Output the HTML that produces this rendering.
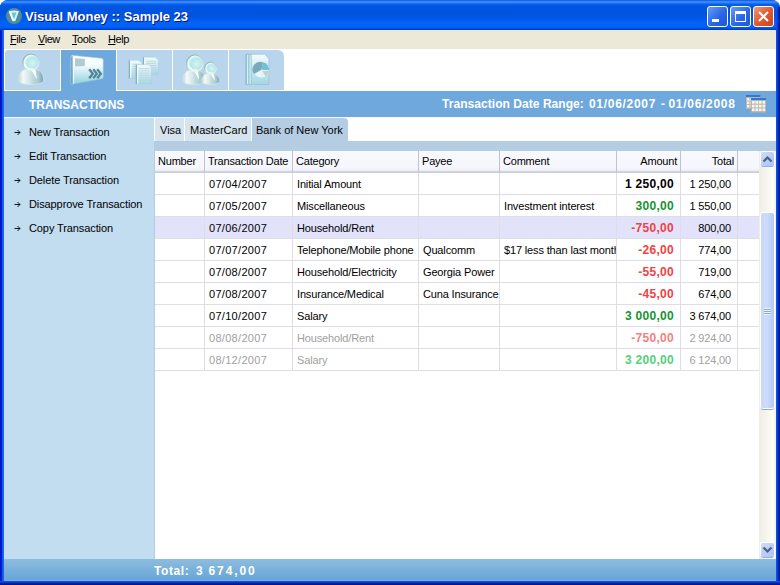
<!DOCTYPE html>
<html><head><meta charset="utf-8">
<style>
*{margin:0;padding:0;box-sizing:border-box}
html,body{width:780px;height:585px;overflow:hidden;background:#fff}
body{position:relative;font-family:"Liberation Sans",sans-serif;font-size:11px;color:#000}
.a{position:absolute}
#frame{left:0;top:0;width:780px;height:585px;background:linear-gradient(90deg,#0012b8 0,#0022d0 1.5px,#0a3ee8 2px,#1d68f6 3px,#1a62f2 4px);border-radius:8px 8px 0 0}
#frameR{left:776px;top:7px;width:4px;height:574px;background:linear-gradient(90deg,#0a58f8 0,#0848e6 1px,#0434c8 2px,#00209f 3px,#001282 4px)}
#frameB{left:0;top:581px;width:780px;height:4px;background:linear-gradient(#0a55f5 0,#0848e2 1px,#0428b0 2px,#001a92 3px,#001080 4px)}
#title{left:0;top:0;width:780px;height:30px;border-radius:8px 8px 0 0;
 background:linear-gradient(#0a4ad8 0,#2a7cff 1px,#3b92ff 2px,#2a7cfa 3px,#0a62f0 4px,#0056e2 6px,#0053de 13px,#0057e6 18px,#0061f6 22px,#0064fb 26px,#0058ea 28px,#0036c4 30px)}
#ttext{left:25px;top:9px;color:#fff;font-weight:bold;font-size:13px;text-shadow:1px 1px 0 #0a1883;white-space:nowrap}
.tb{top:6px;width:21px;height:21px;border:1px solid #fff;border-radius:3px;background:linear-gradient(135deg,#6a9cf8,#2a66e8 55%,#1e56d8)}
#menu{left:4px;top:30px;width:772px;height:19px;background:#ece9d8}
.mi{top:32px;font-size:11px;line-height:14px;letter-spacing:-0.45px}
.mi u{text-decoration:underline}
#toolbar{left:4px;top:49px;width:772px;height:42px;background:#fff}
.tab{top:50px;width:55px;height:40px;background:#b9d5ee}
#band{left:4px;top:91px;width:772px;height:26px;background:#6ea8dc}
#bandline{left:4px;top:117px;width:772px;height:1px;background:#f4f9fd}
#side{left:4px;top:118px;width:150px;height:441px;background:#c2ddf0}
.si{left:29px;font-size:11px;white-space:nowrap;line-height:14px;letter-spacing:-0.1px}
.sa{left:14px;width:8px;height:8px}
#sidesep{left:154px;top:141px;width:1px;height:418px;background:#b5cde3}
#tabs{left:154px;top:118px;width:622px;height:23px;background:#fff}
.t2{top:118px;height:23px;background:#d6e4ef;line-height:25px;padding-left:5px;white-space:nowrap;font-size:11px}
#tband{left:154px;top:141px;width:622px;height:10px;background:#b5cde3}
#grid{left:155px;top:151px;width:604px;height:408px;background:#fff;overflow:hidden}
.hd{top:151px;height:20px;background:linear-gradient(#f8f9fd 0,#f6f7fc 17px,#ecebf3 20px)}
.hl{position:absolute;top:151px;width:1px;height:22px;background:#c2c1d4}
.hb{left:155px;top:171px;width:604px;height:2px;background:linear-gradient(#d9d8e6,#c8c7da)}
.vl{position:absolute;top:173px;width:1px;height:198px;background:#dfdee6}
.rl{position:absolute;left:155px;width:604px;height:1px;background:#dfdee6}
.c{position:absolute;height:21px;line-height:23px;white-space:nowrap;overflow:hidden;font-size:11px;letter-spacing:-0.15px}
.dt{letter-spacing:0.3px}
.r{text-align:right}
.ht{position:absolute;top:151px;height:20px;line-height:20px;white-space:nowrap;font-size:11px;letter-spacing:-0.2px}
.b{font-weight:bold;font-size:12px;letter-spacing:0.3px}
.g{color:#139532;font-weight:bold;font-size:12px;letter-spacing:0.3px}
.rd{color:#f04343;font-weight:bold;font-size:12px;letter-spacing:0.3px}
.gl{color:#52d17a;font-weight:bold;font-size:12px;letter-spacing:0.3px}
.rdl{color:#f47f7f;font-weight:bold;font-size:12px;letter-spacing:0.3px}
.gr{color:#a0a0a0}
#sb{left:759px;top:151px;width:17px;height:408px;background:linear-gradient(90deg,#eeede5,#f4f3ee 40%,#fdfdf9 80%,#f3f1e8)}
.sbtn{left:761px;width:13px;height:14px;border-radius:2px;background:linear-gradient(135deg,#d0defc,#b8ccf7 60%,#adc3f4);box-shadow:0 1px 0 #97aee0,-1px -1px 0 #fff,1px 1px 0 #fff}
#thumb{left:761px;top:213px;width:13px;height:195px;border-radius:2px;background:linear-gradient(90deg,#c8d8fb,#cddbfc 40%,#bccff8 85%,#b0c6f4);box-shadow:-1px 0 0 #fff,1px 0 0 #fff,0 -1px 0 #fff,0 1px 0 #fff,0 2px 0 #8fa8dc}
#foot{left:4px;top:559px;width:772px;height:22px;background:linear-gradient(#8dbde0,#68a6d7 92%,#78b4de)}
.ftext{top:563px;color:#fff;font-weight:bold;font-size:12px;line-height:16px;white-space:nowrap}
</style></head><body>
<div class="a" id="frame"></div><div class="a" id="frameB"></div>
<div class="a" id="title"></div><div class="a" id="frameR"></div>
<svg class="a" style="left:5px;top:7px" width="18" height="18" viewBox="0 0 18 18"><circle cx="9" cy="9" r="8" fill="#4f8c9c"/><path d="M4 4.2 Q9 3 14 4.2 L10.2 14.2 L7.8 14.2Z" fill="#d8f6fa"/><path d="M6.5 5.6 L11.5 5.6 L9.3 11.5 L8.7 11.5Z" fill="#6cc2d8"/><path d="M4.4 4.6 L7.9 13.6" stroke="#ffffff" stroke-width="1.3"/></svg>
<div class="a" id="ttext">Visual Money :: Sample 23</div>
<div class="a tb" style="left:707px"><div class="a" style="left:4px;top:12px;width:7px;height:3px;background:#fff"></div></div>
<div class="a tb" style="left:730px"><div class="a" style="left:4px;top:4px;width:11px;height:11px;border:1px solid #fff;border-top-width:3px"></div></div>
<div class="a tb" style="left:753px;background:linear-gradient(135deg,#f09a7a,#e05a32 50%,#cc4420)"><svg class="a" style="left:4px;top:4px" width="11" height="11"><path d="M1 1L10 10M10 1L1 10" stroke="#fff" stroke-width="2"/></svg></div>
<div class="a" id="menu"></div>
<div class="a mi" style="left:10px"><u>F</u>ile</div>
<div class="a mi" style="left:38px"><u>V</u>iew</div>
<div class="a mi" style="left:72px"><u>T</u>ools</div>
<div class="a mi" style="left:108px"><u>H</u>elp</div>
<div class="a" id="toolbar"></div>
<div class="a tab" style="left:5px;border-top-left-radius:3px"></div>
<div class="a tab" style="left:61px;height:41px;background:#6ea8dc"></div>
<div class="a tab" style="left:117px"></div>
<div class="a tab" style="left:173px"></div>
<div class="a tab" style="left:229px;border-top-right-radius:6px"></div>
<div class="a" id="band"></div><div class="a" id="bandline"></div>
<svg class="a" style="left:0;top:0" width="780" height="120" viewBox="0 0 780 120"><defs><radialGradient id="hg" cx="0.6" cy="0.55" r="0.62"><stop offset="0" stop-color="#d4f4f4"/><stop offset="0.55" stop-color="#b8e6ea"/><stop offset="0.82" stop-color="#e8faf6"/><stop offset="1" stop-color="#96b8be"/></radialGradient><linearGradient id="bg" x1="0" y1="0" x2="1" y2="0"><stop offset="0" stop-color="#bcd6da"/><stop offset="0.18" stop-color="#f4fafa"/><stop offset="0.42" stop-color="#d6e8ea"/><stop offset="0.6" stop-color="#bcd6dc"/><stop offset="0.8" stop-color="#a8cad2"/><stop offset="1" stop-color="#6fa2b4"/></linearGradient><linearGradient id="cg" x1="0" y1="0" x2="0" y2="1"><stop offset="0" stop-color="#ffffff"/><stop offset="0.35" stop-color="#f4fcfd"/><stop offset="1" stop-color="#8fd0e0"/></linearGradient><linearGradient id="dg" x1="0" y1="0" x2="0" y2="1"><stop offset="0" stop-color="#f4fbfd"/><stop offset="1" stop-color="#a4d6e2"/></linearGradient><linearGradient id="hs" x1="0" y1="0" x2="0.6" y2="1"><stop offset="0" stop-color="#7fa0a8"/><stop offset="0.5" stop-color="#a9c8c8"/><stop offset="1" stop-color="#f2fbf0"/></linearGradient></defs><path d="M18.5 80.02 C18.5 71.7 23.5 68.5 31.0 68.5 C38.5 68.5 43.5 71.7 43.5 80.02 C43.5 83.5 37.25 84.5 31.0 84.5 C24.75 84.5 18.5 83.5 18.5 80.02Z" fill="url(#bg)" stroke="#d8e6dc" stroke-width="0.7"/><path d="M31.0 69.0 L35.5 69.7 L36.75 78.1 L36.25 78.74Z" fill="#ffffff" opacity="0.95"/><circle cx="30.9" cy="62.3" r="8.2" fill="url(#hg)" stroke="url(#hs)" stroke-width="0.9"/><path d="M24.34 63.94 A6.56 6.56 0 0 0 33.36 68.45" fill="none" stroke="#f4fff8" stroke-width="1.64" opacity="0.8"/><path d="M72.5 55.2 L101.8 58.2 Q103.3 58.4 103.3 60 L103.3 77.2 Q103.3 78.6 101.8 78.8 L72.5 84.2 Q70.8 84.4 70.8 82.6 L70.8 57 Q70.8 55 72.5 55.2Z" fill="url(#cg)" stroke="#8cc4d2" stroke-width="0.6"/><path d="M71.2 56.5 L72.6 56 L72.6 83.6 L71.2 83.2Z" fill="#5e9cb0"/><path d="M73 56.2 L74 56.2 L74 83.6 L73 83.8Z" fill="#f4fcff"/><path d="M75 58.3 L84.8 59.1 L84.8 66 L75 66.4Z" fill="#b2cbd3"/><path d="M89.2 69.2 L92.8 73.8 L89.2 78.2" fill="none" stroke="#4f8598" stroke-width="2.3"/><path d="M93.2 69.2 L96.8 73.8 L93.2 78.2" fill="none" stroke="#4f8598" stroke-width="2.3"/><path d="M97.2 69.2 L100.8 73.8 L97.2 78.2" fill="none" stroke="#4f8598" stroke-width="2.3"/><path d="M128.8 60.3 H138.8 L141.8 63.3 V78.4 H128.8Z" fill="url(#dg)" stroke="#a8cdd8" stroke-width="0.5"/><rect x="128.8" y="60.3" width="1.3" height="18.1" fill="#80b2c4"/><rect x="130.10000000000002" y="60.599999999999994" width="1.2" height="17.5" fill="#f0fbff"/><rect x="132.3" y="63.8" width="7.5" height="0.9" fill="#b8d8e2"/><rect x="132.3" y="66.0" width="7.5" height="0.9" fill="#b8d8e2"/><rect x="132.3" y="68.2" width="7.5" height="0.9" fill="#b8d8e2"/><rect x="132.3" y="70.39999999999999" width="7.5" height="0.9" fill="#b8d8e2"/><rect x="132.3" y="72.6" width="7.5" height="0.9" fill="#b8d8e2"/><rect x="132.3" y="74.8" width="7.5" height="0.9" fill="#b8d8e2"/><path d="M142.9 57.2 H155.3 L158.3 60.2 V74.6 H142.9Z" fill="url(#dg)" stroke="#a8cdd8" stroke-width="0.5"/><rect x="142.9" y="57.2" width="1.3" height="17.4" fill="#80b2c4"/><rect x="144.20000000000002" y="57.5" width="1.2" height="16.799999999999997" fill="#f0fbff"/><rect x="146.4" y="60.7" width="9.9" height="0.9" fill="#b8d8e2"/><rect x="146.4" y="62.900000000000006" width="9.9" height="0.9" fill="#b8d8e2"/><rect x="146.4" y="65.10000000000001" width="9.9" height="0.9" fill="#b8d8e2"/><rect x="146.4" y="67.3" width="9.9" height="0.9" fill="#b8d8e2"/><rect x="146.4" y="69.5" width="9.9" height="0.9" fill="#b8d8e2"/><rect x="146.4" y="71.7" width="9.9" height="0.9" fill="#b8d8e2"/><path d="M135.7 64.7 H148.39999999999998 L151.39999999999998 67.7 V83.9 H135.7Z" fill="url(#dg)" stroke="#a8cdd8" stroke-width="0.5"/><rect x="135.7" y="64.7" width="1.3" height="19.2" fill="#80b2c4"/><rect x="137.0" y="65.0" width="1.2" height="18.599999999999998" fill="#f0fbff"/><rect x="139.2" y="68.2" width="10.2" height="0.9" fill="#b8d8e2"/><rect x="139.2" y="70.4" width="10.2" height="0.9" fill="#b8d8e2"/><rect x="139.2" y="72.60000000000001" width="10.2" height="0.9" fill="#b8d8e2"/><rect x="139.2" y="74.8" width="10.2" height="0.9" fill="#b8d8e2"/><rect x="139.2" y="77.0" width="10.2" height="0.9" fill="#b8d8e2"/><rect x="139.2" y="79.2" width="10.2" height="0.9" fill="#b8d8e2"/><rect x="139.2" y="81.4" width="10.2" height="0.9" fill="#b8d8e2"/><path d="M182.8 80.384 C182.8 72.74 187.24 69.8 193.9 69.8 C200.56 69.8 205 72.74 205 80.384 C205 83.5 199.45 84.5 193.9 84.5 C188.35000000000002 84.5 182.8 83.5 182.8 80.384Z" fill="url(#bg)" stroke="#d8e6dc" stroke-width="0.7"/><path d="M193.9 70.3 L197.89600000000002 71.0 L199.006 78.62 L198.562 79.208Z" fill="#ffffff" opacity="0.95"/><circle cx="194.8" cy="63.3" r="8.4" fill="url(#hg)" stroke="url(#hs)" stroke-width="0.9"/><path d="M188.08 64.98 A6.720000000000001 6.720000000000001 0 0 0 197.32000000000002 69.6" fill="none" stroke="#f4fff8" stroke-width="1.6800000000000002" opacity="0.8"/><path d="M201.6 81.364 C201.6 75.53999999999999 205.22 73.3 210.64999999999998 73.3 C216.07999999999998 73.3 219.7 75.53999999999999 219.7 81.364 C219.7 83.5 215.17499999999998 84.5 210.64999999999998 84.5 C206.125 84.5 201.6 83.5 201.6 81.364Z" fill="url(#bg)" stroke="#d8e6dc" stroke-width="0.7"/><path d="M210.64999999999998 73.8 L213.908 74.5 L214.813 80.02 L214.451 80.468Z" fill="#ffffff" opacity="0.95"/><circle cx="210.5" cy="68.1" r="5.9" fill="url(#hg)" stroke="url(#hs)" stroke-width="0.9"/><path d="M205.78 69.28 A4.720000000000001 4.720000000000001 0 0 0 212.27 72.52499999999999" fill="none" stroke="#f4fff8" stroke-width="1.1800000000000002" opacity="0.8"/><path d="M245.6 54.2 H264.5 L268.9 58.5 V84.5 H245.6Z" fill="url(#dg)" stroke="#8ec0d0" stroke-width="0.6"/><rect x="245.6" y="54.2" width="6" height="30.3" fill="#8cc2d4"/><rect x="247.2" y="55" width="1" height="29" fill="#f0fbff"/><rect x="249.6" y="55" width="1" height="29" fill="#f0fbff"/><circle cx="261.4" cy="69.8" r="7.8" fill="#e2f2f6"/><path d="M261.4 69.8 L268.9 67 A7.8 7.8 0 1 0 261.4 77.6Z" fill="#e8f6f8"/><path d="M261.4 69.8 L254 74 A7.8 7.8 0 0 1 263 62.2Z" fill="#78aabb"/><path d="M261.4 69.8 L263 62.2 A7.8 7.8 0 0 1 269.2 70.2Z" fill="#6fc0d8"/><path d="M262.5 71 L269 71 L266 77Z" fill="#c4ccc8"/><rect x="746" y="95" width="14.5" height="14" fill="#bcb8b0"/><rect x="747.0" y="98.2" width="2.4" height="2.5" fill="#f2f2ee"/><rect x="747.0" y="101.60000000000001" width="2.4" height="2.5" fill="#f2f2ee"/><rect x="747.0" y="105.0" width="2.4" height="2.5" fill="#f2f2ee"/><rect x="750.2" y="98.2" width="2.4" height="2.5" fill="#f2f2ee"/><rect x="750.2" y="101.60000000000001" width="2.4" height="2.5" fill="#f2f2ee"/><rect x="750.2" y="105.0" width="2.4" height="2.5" fill="#f2f2ee"/><rect x="746" y="95" width="14.5" height="2" fill="#2c7ad6"/><rect x="750.5" y="97.5" width="15.5" height="15" fill="#a8a49c" opacity="0.5"/><rect x="751" y="98" width="15" height="14.5" fill="#bab6ae"/><rect x="751" y="98" width="15" height="2" fill="#2c7ad6"/><rect x="752.0" y="101.0" width="2.6" height="2.7" fill="#f4f4f0"/><rect x="752.0" y="104.7" width="2.6" height="2.7" fill="#f4f4f0"/><rect x="752.0" y="108.4" width="2.6" height="2.7" fill="#f4f4f0"/><rect x="755.5" y="101.0" width="2.6" height="2.7" fill="#f4f4f0"/><rect x="755.5" y="104.7" width="2.6" height="2.7" fill="#f4f4f0"/><rect x="755.5" y="108.4" width="2.6" height="2.7" fill="#f4f4f0"/><rect x="759.0" y="101.0" width="2.6" height="2.7" fill="#f4f4f0"/><rect x="759.0" y="104.7" width="2.6" height="2.7" fill="#f4f4f0"/><rect x="759.0" y="108.4" width="2.6" height="2.7" fill="#f4f4f0"/><rect x="762.5" y="101.0" width="2.6" height="2.7" fill="#f4f4f0"/><rect x="762.5" y="104.7" width="2.6" height="2.7" fill="#f4f4f0"/><rect x="762.5" y="108.4" width="2.6" height="2.7" fill="#f4f4f0"/></svg>
<div class="a" style="left:29px;top:98px;color:#fff;font-weight:bold;font-size:12px;letter-spacing:0px;line-height:14px">TRANSACTIONS</div>
<div class="a" style="left:442px;top:97px;color:#fff;font-weight:bold;font-size:12px;letter-spacing:0.05px;line-height:14px;white-space:nowrap">Transaction Date Range:</div>
<div class="a" style="left:589px;top:97px;color:#fff;font-weight:bold;font-size:12px;letter-spacing:0.7px;line-height:14px;white-space:nowrap">01/06/2007</div>
<div class="a" style="left:661px;top:97px;color:#fff;font-weight:bold;font-size:12px;letter-spacing:0px;line-height:14px;white-space:nowrap">-</div>
<div class="a" style="left:668.5px;top:97px;color:#fff;font-weight:bold;font-size:12px;letter-spacing:0.7px;line-height:14px;white-space:nowrap">01/06/2008</div>
<div class="a" id="side"></div>
<svg class="a sa" style="top:128px" width="8" height="8"><path d="M0.5 4.5H6M3.5 2L6 4.5L3.5 7" fill="none" stroke="#000" stroke-width="0.9"/></svg>
<div class="a si" style="top:125px">New Transaction</div>
<svg class="a sa" style="top:152px" width="8" height="8"><path d="M0.5 4.5H6M3.5 2L6 4.5L3.5 7" fill="none" stroke="#000" stroke-width="0.9"/></svg>
<div class="a si" style="top:149px">Edit Transaction</div>
<svg class="a sa" style="top:176px" width="8" height="8"><path d="M0.5 4.5H6M3.5 2L6 4.5L3.5 7" fill="none" stroke="#000" stroke-width="0.9"/></svg>
<div class="a si" style="top:173px">Delete Transaction</div>
<svg class="a sa" style="top:200px" width="8" height="8"><path d="M0.5 4.5H6M3.5 2L6 4.5L3.5 7" fill="none" stroke="#000" stroke-width="0.9"/></svg>
<div class="a si" style="top:197px">Disapprove Transaction</div>
<svg class="a sa" style="top:224px" width="8" height="8"><path d="M0.5 4.5H6M3.5 2L6 4.5L3.5 7" fill="none" stroke="#000" stroke-width="0.9"/></svg>
<div class="a si" style="top:221px">Copy Transaction</div>
<div class="a" id="tabs"></div>
<div class="a t2" style="left:155px;width:29px;border-top-left-radius:2px">Visa</div>
<div class="a t2" style="left:185px;width:66px">MasterCard</div>
<div class="a t2" style="left:252px;width:96px;background:#b5cde3;border-top-right-radius:4px;padding-left:4px">Bank of New York</div>
<div class="a" id="tband"></div><div class="a" id="sidesep"></div>
<div class="a" id="grid"></div>
<div class="a hd" style="left:155px;width:604px"></div>
<div class="a hb"></div>
<div class="hl" style="left:204px"></div>
<div class="hl" style="left:292px"></div>
<div class="hl" style="left:418px"></div>
<div class="hl" style="left:499px"></div>
<div class="hl" style="left:616px"></div>
<div class="hl" style="left:680px"></div>
<div class="hl" style="left:737px"></div>
<div class="ht" style="left:158px;width:46px">Number</div>
<div class="ht" style="left:208px;width:84px">Transaction Date</div>
<div class="ht" style="left:296px;width:122px">Category</div>
<div class="ht" style="left:422px;width:77px">Payee</div>
<div class="ht" style="left:503px;width:113px">Comment</div>
<div class="ht r" style="left:617px;width:60px">Amount</div>
<div class="ht r" style="left:681px;width:53px">Total</div>
<div class="rl" style="top:194px"></div>
<div class="c dt" style="left:209px;top:173px;width:83px">07/04/2007</div>
<div class="c" style="left:297px;top:173px;width:121px">Initial Amount</div>
<div class="c r b" style="left:617px;top:173px;width:57px">1 250,00</div>
<div class="c r" style="left:681px;top:173px;width:50px">1 250,00</div>
<div class="rl" style="top:216px"></div>
<div class="c dt" style="left:209px;top:195px;width:83px">07/05/2007</div>
<div class="c" style="left:297px;top:195px;width:121px">Miscellaneous</div>
<div class="c" style="left:504px;top:195px;width:112px">Investment interest</div>
<div class="c r g" style="left:617px;top:195px;width:57px">300,00</div>
<div class="c r" style="left:681px;top:195px;width:50px">1 550,00</div>
<div class="a" style="left:155px;top:217px;width:604px;height:21px;background:#e2e2fb"></div>
<div class="rl" style="top:238px"></div>
<div class="c dt" style="left:209px;top:217px;width:83px">07/06/2007</div>
<div class="c" style="left:297px;top:217px;width:121px">Household/Rent</div>
<div class="c r rd" style="left:617px;top:217px;width:57px">-750,00</div>
<div class="c r" style="left:681px;top:217px;width:50px">800,00</div>
<div class="rl" style="top:260px"></div>
<div class="c dt" style="left:209px;top:239px;width:83px">07/07/2007</div>
<div class="c" style="left:297px;top:239px;width:121px">Telephone/Mobile phone</div>
<div class="c" style="left:423px;top:239px;width:76px">Qualcomm</div>
<div class="c" style="left:504px;top:239px;width:112px">$17 less than last month</div>
<div class="c r rd" style="left:617px;top:239px;width:57px">-26,00</div>
<div class="c r" style="left:681px;top:239px;width:50px">774,00</div>
<div class="rl" style="top:282px"></div>
<div class="c dt" style="left:209px;top:261px;width:83px">07/08/2007</div>
<div class="c" style="left:297px;top:261px;width:121px">Household/Electricity</div>
<div class="c" style="left:423px;top:261px;width:76px">Georgia Power</div>
<div class="c r rd" style="left:617px;top:261px;width:57px">-55,00</div>
<div class="c r" style="left:681px;top:261px;width:50px">719,00</div>
<div class="rl" style="top:304px"></div>
<div class="c dt" style="left:209px;top:283px;width:83px">07/08/2007</div>
<div class="c" style="left:297px;top:283px;width:121px">Insurance/Medical</div>
<div class="c" style="left:423px;top:283px;width:76px">Cuna Insurance</div>
<div class="c r rd" style="left:617px;top:283px;width:57px">-45,00</div>
<div class="c r" style="left:681px;top:283px;width:50px">674,00</div>
<div class="rl" style="top:326px"></div>
<div class="c dt" style="left:209px;top:305px;width:83px">07/10/2007</div>
<div class="c" style="left:297px;top:305px;width:121px">Salary</div>
<div class="c r g" style="left:617px;top:305px;width:57px">3 000,00</div>
<div class="c r" style="left:681px;top:305px;width:50px">3 674,00</div>
<div class="rl" style="top:348px"></div>
<div class="c gr dt" style="left:209px;top:327px;width:83px">08/08/2007</div>
<div class="c gr" style="left:297px;top:327px;width:121px">Household/Rent</div>
<div class="c r rdl" style="left:617px;top:327px;width:57px">-750,00</div>
<div class="c r gr" style="left:681px;top:327px;width:50px">2 924,00</div>
<div class="rl" style="top:370px"></div>
<div class="c gr dt" style="left:209px;top:349px;width:83px">08/12/2007</div>
<div class="c gr" style="left:297px;top:349px;width:121px">Salary</div>
<div class="c r gl" style="left:617px;top:349px;width:57px">3 200,00</div>
<div class="c r gr" style="left:681px;top:349px;width:50px">6 124,00</div>
<div class="vl" style="left:204px"></div>
<div class="vl" style="left:292px"></div>
<div class="vl" style="left:418px"></div>
<div class="vl" style="left:499px"></div>
<div class="vl" style="left:616px"></div>
<div class="vl" style="left:680px"></div>
<div class="vl" style="left:737px"></div>
<div class="a" id="sb"></div>
<div class="a sbtn" style="top:152px"><svg class="a" style="left:1px;top:3px" width="11" height="8"><path d="M1.5 6.5L5.5 2.5L9.5 6.5" fill="none" stroke="#4d6185" stroke-width="2.2"/></svg></div>
<div class="a" id="thumb"><div class="a" style="left:3px;top:95px;width:7px;height:7px;background:repeating-linear-gradient(#eef3fe 0 1px,#8fa6dc 1px 2px)"></div></div>
<div class="a sbtn" style="top:543px"><svg class="a" style="left:1px;top:3px" width="11" height="8"><path d="M1.5 1.5L5.5 5.5L9.5 1.5" fill="none" stroke="#4d6185" stroke-width="2.2"/></svg></div>
<div class="a" id="foot"></div>
<div class="a ftext" style="left:154px;letter-spacing:0.6px">Total:</div>
<div class="a ftext" style="left:196px;letter-spacing:0px">3</div>
<div class="a ftext" style="left:208.5px;letter-spacing:1.9px">674,00</div>
</body></html>
